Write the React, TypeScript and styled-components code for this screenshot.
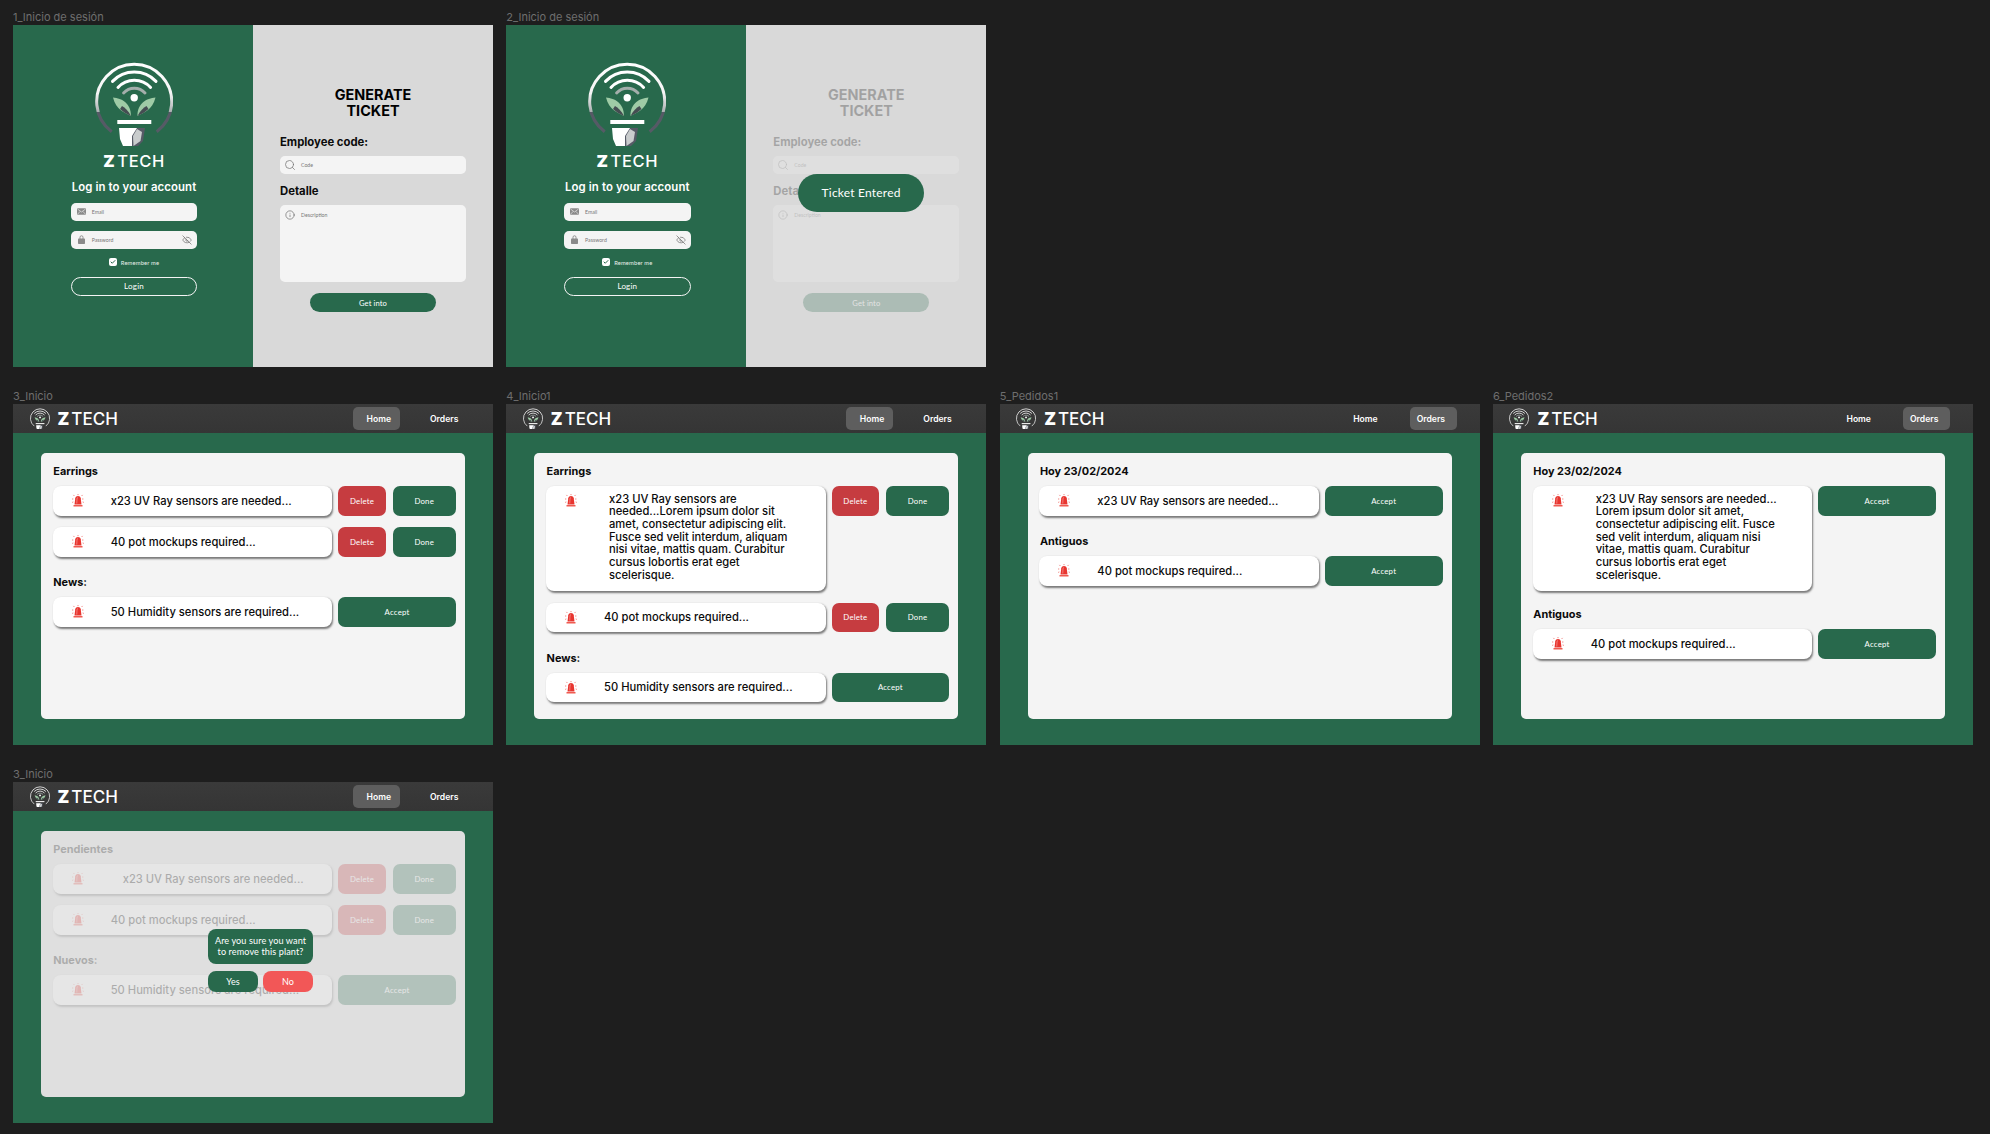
import React from "react";
import styled, { createGlobalStyle } from "styled-components";
import { EyeOff, Info, Search, Check } from "lucide-react";

const GREEN = "#28694c";
const HEAD = '"Inter", "Liberation Sans", sans-serif';
const SOFT = '"Lato", "Liberation Sans", sans-serif';

const Global = createGlobalStyle`
	html, body {
		margin: 0;
		padding: 0;
		background: #1e1e1e;
	}
	* {
		box-sizing: border-box;
	}
`;

const Canvas = styled.div`
	display: grid;
	grid-template-columns: repeat(4, 480px);
	column-gap: 13.33px;
	row-gap: 21px;
	align-items: start;
	align-content: start;
	width: 1990px;
	height: 1134px;
	padding: 9px 0 0 13px;
	overflow: hidden;
`;

const Figure = styled.section<{ $row?: number; $column?: number }>`
	grid-row: ${(p) => p.$row ?? "auto"};
	grid-column: ${(p) => p.$column ?? "auto"};
`;

const FrameLabel = styled.div`
	height: 16px;
	font: 400 11px/16px ${HEAD};
	color: #6e6e6e;
	white-space: nowrap;
`;

/* login frames */
const Split = styled.div`
	display: grid;
	grid-template-columns: 240px 240px;
	height: 342px;
`;

const BrandPanel = styled.div`
	display: flex;
	flex-direction: column;
	align-items: center;
	padding: 36px 0 0 2px;
	background: ${GREEN};
`;

const Wordmark = styled.div<{ $small?: boolean }>`
	display: flex;
	align-items: center;
	margin-top: ${(p) => (p.$small ? 0 : 7)}px;
	font: 500 ${(p) => (p.$small ? 17 : 16.5)}px/16px ${HEAD};
	letter-spacing: ${(p) => (p.$small ? 0 : 0.6)}px;
	color: #fff;
	b {
		font-weight: 900;
		margin-right: 2px;
	}
`;

const LoginTitle = styled.h2`
	margin: 11px 0 0;
	font: 600 11.4px/14px ${HEAD};
	letter-spacing: 0.1px;
	color: #fff;
	white-space: nowrap;
`;

const InputBox = styled.div<{ $gap: number }>`
	display: flex;
	align-items: center;
	gap: 6px;
	width: 126.6px;
	height: 18.6px;
	margin-top: ${(p) => p.$gap}px;
	padding: 0 5px 0 6px;
	border-radius: 5px;
	background: #f4f4f4;
	font: 400 5.2px ${SOFT};
	color: #777;
	svg {
		flex: none;
	}
	svg:last-child:not(:first-child) {
		margin-left: auto;
	}
`;

const RememberRow = styled.div`
	display: flex;
	align-items: center;
	gap: 4px;
	height: 10px;
	margin-top: 8px;
	font: 400 5.8px ${SOFT};
	letter-spacing: 0.15px;
	color: #e8efeb;
`;

const CheckBox = styled.span`
	display: flex;
	align-items: center;
	justify-content: center;
	width: 8px;
	height: 8px;
	border-radius: 2px;
	background: #fff;
	color: ${GREEN};
`;

const LoginButton = styled.button`
	width: 126.6px;
	height: 19px;
	margin-top: 9.5px;
	padding: 0;
	border: 1px solid #f4f4f4;
	border-radius: 10px;
	background: transparent;
	font: 400 8px ${SOFT};
	letter-spacing: 0.2px;
	color: #fff;
`;

const TicketPanel = styled.div`
	position: relative;
	background: #d9d9d9;
`;

const TicketForm = styled.div<{ $dim?: boolean }>`
	display: flex;
	flex-direction: column;
	height: 100%;
	padding: 62px 27px 0;
	opacity: ${(p) => (p.$dim ? 0.25 : 1)};
`;

const TicketTitle = styled.h2`
	margin: 0;
	font: 700 14.4px/16px ${HEAD};
	text-align: center;
	color: #000;
`;

const FieldLabel = styled.div<{ $gap: number }>`
	margin-top: ${(p) => p.$gap}px;
	font: 700 11.3px/14px ${HEAD};
	color: #0b0b0b;
`;

const TextField = styled.div<{ $tall?: boolean }>`
	display: flex;
	align-items: ${(p) => (p.$tall ? "flex-start" : "center")};
	gap: ${(p) => (p.$tall ? 6 : 5)}px;
	height: ${(p) => (p.$tall ? 77.5 : 18.6)}px;
	margin-top: 6.5px;
	padding: ${(p) => (p.$tall ? "5.5px 0 0 5px" : "0 0 0 4px")};
	border-radius: 5px;
	background: #f4f4f4;
	font: 400 5.2px/10px ${SOFT};
	color: #777;
	svg {
		flex: none;
	}
`;

const SubmitButton = styled.button`
	align-self: center;
	width: 126px;
	height: 19px;
	margin-top: 11px;
	padding: 0;
	border: 0;
	border-radius: 10px;
	background: ${GREEN};
	font: 400 7.6px ${SOFT};
	letter-spacing: 0.1px;
	color: #fff;
`;

const Toast = styled.div`
	position: absolute;
	left: 51.5px;
	top: 149px;
	display: flex;
	align-items: center;
	justify-content: center;
	width: 126.5px;
	height: 38px;
	padding-bottom: 1px;
	border-radius: 19px;
	background: ${GREEN};
	font: 400 12px ${SOFT};
	letter-spacing: 0.2px;
	color: #fff;
`;

/* app frames */
const AppFrame = styled.div`
	display: flex;
	flex-direction: column;
	height: 341px;
	background: ${GREEN};
`;

const Header = styled.header`
	display: flex;
	flex: none;
	align-items: center;
	justify-content: space-between;
	height: 29px;
	padding: 0 23px 0 16.5px;
	background: linear-gradient(#3a3a3a, #353535);
`;

const HeaderBrand = styled.div`
	display: flex;
	align-items: center;
	gap: 8px;
`;

const Nav = styled.nav`
	display: flex;
	gap: 23.5px;
`;

const NavItem = styled.a<{ $active?: boolean; $inset: number }>`
	display: flex;
	align-items: center;
	width: 47px;
	height: 23px;
	padding-left: ${(p) => p.$inset}px;
	border-radius: 5px;
	background: ${(p) => (p.$active ? "#5e5e5e" : "transparent")};
	font: 600 8.6px ${HEAD};
	color: #fff;
`;

const Body = styled.main`
	flex: 1;
	padding: 20px 28px 27px;
`;

const Card = styled.div<{ $dim?: boolean }>`
	height: 265.5px;
	border-radius: 5px;
	background: ${(p) => (p.$dim ? "#dfdfdf" : "#f4f4f4")};
	position: relative;
`;

const CardInner = styled.div<{ $dim?: boolean }>`
	padding: 11px 9px 0 11.7px;
	opacity: ${(p) => (p.$dim ? 0.24 : 1)};
`;

const SectionTitle = styled.h3<{ $gap: number }>`
	margin: ${(p) => p.$gap}px 0 8px;
	padding-left: 0.6px;
	font: 700 10.9px/14px ${HEAD};
	color: #0b0b0b;
`;

const ItemRow = styled.div`
	display: flex;
	gap: 6px;
	align-items: flex-start;
	& + & {
		margin-top: 11.5px;
	}
`;

const ItemPill = styled.div<{ $expanded: boolean }>`
	display: flex;
	flex: none;
	align-items: ${(p) => (p.$expanded ? "flex-start" : "center")};
	width: 279.5px;
	height: ${(p) => (p.$expanded ? 105 : 29.5)}px;
	padding: ${(p) => (p.$expanded ? "6.8px" : "0")} 0 0 19px;
	border-radius: 8px;
	background: #fff;
	box-shadow: 1px 1.5px 2px rgba(0, 0, 0, 0.5);
`;

const ItemText = styled.div<{ $indent: number; $expanded: boolean }>`
	margin-left: ${(p) => p.$indent - 31}px;
	padding-top: ${(p) => (p.$expanded ? 0 : 1)}px;
	font: 500 11.2px/12.67px ${HEAD};
	color: #0b0b0b;
	white-space: nowrap;
`;

const SirenSlot = styled.span<{ $expanded: boolean }>`
	display: flex;
	flex: none;
	margin-top: ${(p) => (p.$expanded ? 1 : 0)}px;
`;

const Actions = styled.div`
	display: flex;
	gap: 6.7px;
`;

const ActionButton = styled.button<{ $kind: "delete" | "done" | "accept" }>`
	width: ${(p) => ({ delete: 47.7, done: 63.3, accept: 117.7 }[p.$kind])}px;
	height: 29.5px;
	padding: 0;
	border: 0;
	border-radius: 7px;
	background: ${(p) => (p.$kind === "delete" ? "#c63c40" : GREEN)};
	font: 400 7.8px ${SOFT};
	letter-spacing: 0.2px;
	color: #fff;
`;

const Confirm = styled.div`
	position: absolute;
	left: 167px;
	top: 97.7px;
	width: 105px;
`;

const ConfirmBubble = styled.div`
	display: flex;
	align-items: center;
	justify-content: center;
	height: 35px;
	border-radius: 8px;
	background: ${GREEN};
	font: 400 9.1px/11px ${SOFT};
	letter-spacing: 0.1px;
	text-align: center;
	color: #fff;
`;

const ConfirmActions = styled.div`
	display: flex;
	justify-content: space-between;
	margin-top: 7px;
`;

const ConfirmButton = styled.button<{ $no?: boolean }>`
	width: 50px;
	height: 21.5px;
	padding: 0;
	border: 0;
	border-radius: 8px;
	background: ${(p) => (p.$no ? "#f25757" : GREEN)};
	font: 400 9px ${SOFT};
	color: #fff;
`;

function Logo({ width, id, light }: { width: number; id: string; light?: boolean }) {
	const low = light ? "#e8e8e8" : "#565a66";
	return (
		<svg width={width} height={(width * 85) / 78} viewBox="0 0 78 85" style={{ flex: "none" }}>
			<defs>
				<linearGradient id={id} gradientUnits="userSpaceOnUse" x1="0" y1="0" x2="0" y2="72">
					<stop offset="0" stopColor="#fff" />
					<stop offset="0.45" stopColor="#f4f4f4" />
					<stop offset="0.71" stopColor={light ? "#eee" : "#a9aeb0"} />
					<stop offset="0.71" stopColor={low} />
					<stop offset="1" stopColor={low} />
				</linearGradient>
			</defs>
			<path d="M16.7 70.7A37.5 37.5 0 1 1 61.7 70.7" fill="none" stroke={`url(#${id})`} strokeWidth="3" />
			<g fill="none" strokeWidth="3" strokeLinecap="round">
				<path d="M17.5 20.4A30 30 0 0 1 61 20.4" stroke="#fff" />
				<path d="M23 26.4A22 22 0 0 1 55.6 26.4" stroke="#fff" />
				<path d="M28.6 32A14.5 14.5 0 0 1 50 32" stroke="#a4aeab" />
			</g>
			<circle cx="39.2" cy="36.7" r="3.7" fill="#fff" />
			<path d="M18 36.5C27 37.5 36 42 36 55C30 52 21 49 18 36.5Z" fill="#9fcba6" />
			<path d="M60.5 36.5C51.5 37.5 42.5 42 42.5 55C48.5 52 57.5 49 60.5 36.5Z" fill="#9fcba6" />
			<path d="M25 48C28 51 32 53 36 55C33.5 50 30 46.5 27 45Z" fill="#454d52" />
			<path d="M53.5 48C50.5 51 46.5 53 42.5 55C45 50 48.5 46.5 51.5 45Z" fill="#454d52" />
			<rect x="22.3" y="59" width="34" height="4" fill="#fff" />
			<path d="M28 67H50L48 80L43 85H30Z" fill="#565a66" />
			<path d="M24 67H42L37 75V85H28L25 78Z" fill="#fff" />
			<path d="M38 75L42 68L47 71L45.5 80L38.5 85Z" fill="#c9cccd" />
		</svg>
	);
}

function Brand({ small }: { small?: boolean }) {
	return (
		<Wordmark $small={small}>
			<b>Z</b>TECH
		</Wordmark>
	);
}

function MailIcon() {
	return (
		<svg width="9" height="7" viewBox="0 0 18 13">
			<rect width="18" height="13" rx="1.5" fill="#8a8a8a" />
			<path d="M1 1.5L9 7.5L17 1.5M1 12L6.5 6M17 12L11.5 6" fill="none" stroke="#f4f4f4" strokeWidth="1.2" />
		</svg>
	);
}

function LockIcon() {
	return (
		<svg width="9" height="9" viewBox="-2 0 18 18">
			<path d="M4 8V4.5a3 3 0 0 1 6 0V8" fill="none" stroke="#8a8a8a" strokeWidth="1.8" />
			<rect y="7" width="14" height="11" rx="1.5" fill="#8a8a8a" />
		</svg>
	);
}

function Siren() {
	return (
		<svg width="12" height="13" viewBox="0 0 24 26">
			<path d="M5 21L6.5 8.5C7 5.5 9.5 4 12 4S17 5.5 17.5 8.5L19 21Z" fill="#e8352f" />
			<path d="M9.5 19L10 9.5C10.2 8 11 7 12 7" fill="none" stroke="#fff" strokeOpacity="0.6" strokeWidth="1.2" />
			<rect x="3" y="22" width="18" height="3" fill="#ef5a50" />
			<g stroke="#e8352f" strokeWidth="1.2" strokeLinecap="round" strokeDasharray="1 1.5">
				<path d="M12 0.5V2.5M3.5 2.5L5 4.5M20.5 2.5L19 4.5M0.8 10H3M21 10H23.2M1 16.5L3 15.8M23 16.5L21 15.8" />
			</g>
		</svg>
	);
}

function LoginPanel({ id }: { id: string }) {
	return (
		<BrandPanel>
			<Logo width={78} id={id} />
			<Brand />
			<LoginTitle>Log in to your account</LoginTitle>
			<InputBox $gap={8.5}>
				<MailIcon />
				Email
			</InputBox>
			<InputBox $gap={9.5}>
				<LockIcon />
				Password
				<EyeOff size={10} color="#666" strokeWidth={1.6} />
			</InputBox>
			<RememberRow>
				<CheckBox>
					<Check size={6} strokeWidth={4} />
				</CheckBox>
				Remember me
			</RememberRow>
			<LoginButton>Login</LoginButton>
		</BrandPanel>
	);
}

function TicketContent({ dim }: { dim?: boolean }) {
	return (
		<TicketForm $dim={dim}>
			<TicketTitle>
				GENERATE
				<br />
				TICKET
			</TicketTitle>
			<FieldLabel $gap={16}>Employee code:</FieldLabel>
			<TextField>
				<Search size={12} color="#777" strokeWidth={1.5} />
				Code
			</TextField>
			<FieldLabel $gap={10.4}>Detalle</FieldLabel>
			<TextField $tall>
				<Info size={10} color="#555" strokeWidth={1.4} />
				Description
			</TextField>
			<SubmitButton>Get into</SubmitButton>
		</TicketForm>
	);
}

function AppHeader({ active, id }: { active: "home" | "orders"; id: string }) {
	return (
		<Header>
			<HeaderBrand>
				<Logo width={20} id={id} light />
				<Brand small />
			</HeaderBrand>
			<Nav>
				<NavItem $active={active === "home"} $inset={14}>
					Home
				</NavItem>
				<NavItem $active={active === "orders"} $inset={7}>
					Orders
				</NavItem>
			</Nav>
		</Header>
	);
}

type Kind = "pending" | "accept";

interface IItem {
	lines: string[];
	indent?: number;
	kind: Kind;
}

interface ISection {
	title: string;
	gap: number;
	items: IItem[];
}

function Item({ lines, indent = 58, kind }: IItem) {
	const expanded = lines.length > 1;
	return (
		<ItemRow>
			<ItemPill $expanded={expanded}>
				<SirenSlot $expanded={expanded}>
					<Siren />
				</SirenSlot>
				<ItemText $indent={indent} $expanded={expanded}>
					{lines.map((line) => (
						<div key={line}>{line}</div>
					))}
				</ItemText>
			</ItemPill>
			<Actions>
				{kind === "pending" ? (
					<>
						<ActionButton $kind="delete">Delete</ActionButton>
						<ActionButton $kind="done">Done</ActionButton>
					</>
				) : (
					<ActionButton $kind="accept">Accept</ActionButton>
				)}
			</Actions>
		</ItemRow>
	);
}

function AppScreen({
	active,
	id,
	sections,
	dim,
	children
}: {
	active: "home" | "orders";
	id: string;
	sections: ISection[];
	dim?: boolean;
	children?: React.ReactNode;
}) {
	return (
		<AppFrame>
			<AppHeader active={active} id={id} />
			<Body>
				<Card $dim={dim}>
					<CardInner $dim={dim}>
						{sections.map((s) => (
							<div key={s.title}>
								<SectionTitle $gap={s.gap}>{s.title}</SectionTitle>
								{s.items.map((item) => (
									<Item key={item.lines[0]} {...item} />
								))}
							</div>
						))}
					</CardInner>
					{children}
				</Card>
			</Body>
		</AppFrame>
	);
}

const UV = "x23 UV Ray sensors are needed...";
const POTS = "40 pot mockups required...";
const HUMIDITY = "50 Humidity sensors are required...";

export default function App() {
	return (
		<>
			<Global />
			<Canvas>
				<Figure>
					<FrameLabel>1_Inicio de sesión</FrameLabel>
					<Split>
						<LoginPanel id="arc-1" />
						<TicketPanel>
							<TicketContent />
						</TicketPanel>
					</Split>
				</Figure>
				<Figure>
					<FrameLabel>2_Inicio de sesión</FrameLabel>
					<Split>
						<LoginPanel id="arc-2" />
						<TicketPanel>
							<TicketContent dim />
							<Toast>Ticket Entered</Toast>
						</TicketPanel>
					</Split>
				</Figure>
				<Figure $row={2} $column={1}>
					<FrameLabel>3_Inicio</FrameLabel>
					<AppScreen
						active="home"
						id="arc-3"
						sections={[
							{
								title: "Earrings",
								gap: 0,
								items: [
									{ lines: [UV], kind: "pending" },
									{ lines: [POTS], kind: "pending" }
								]
							},
							{ title: "News:", gap: 18.5, items: [{ lines: [HUMIDITY], kind: "accept" }] }
						]}
					/>
				</Figure>
				<Figure $row={2} $column={2}>
					<FrameLabel>4_Inicio1</FrameLabel>
					<AppScreen
						active="home"
						id="arc-4"
						sections={[
							{
								title: "Earrings",
								gap: 0,
								items: [
									{
										lines: [
											"x23 UV Ray sensors are",
											"needed...Lorem ipsum dolor sit",
											"amet, consectetur adipiscing elit.",
											"Fusce sed velit interdum, aliquam",
											"nisi vitae, mattis quam. Curabitur",
											"cursus lobortis erat eget",
											"scelerisque."
										],
										indent: 63,
										kind: "pending"
									},
									{ lines: [POTS], kind: "pending" }
								]
							},
							{ title: "News:", gap: 18.5, items: [{ lines: [HUMIDITY], kind: "accept" }] }
						]}
					/>
				</Figure>
				<Figure $row={2} $column={3}>
					<FrameLabel>5_Pedidos1</FrameLabel>
					<AppScreen
						active="orders"
						id="arc-5"
						sections={[
							{ title: "Hoy 23/02/2024", gap: 0, items: [{ lines: [UV], kind: "accept" }] },
							{ title: "Antiguos", gap: 18.5, items: [{ lines: [POTS], kind: "accept" }] }
						]}
					/>
				</Figure>
				<Figure $row={2} $column={4}>
					<FrameLabel>6_Pedidos2</FrameLabel>
					<AppScreen
						active="orders"
						id="arc-6"
						sections={[
							{
								title: "Hoy 23/02/2024",
								gap: 0,
								items: [
									{
										lines: [
											UV,
											"Lorem ipsum dolor sit amet,",
											"consectetur adipiscing elit. Fusce",
											"sed velit interdum, aliquam nisi",
											"vitae, mattis quam. Curabitur",
											"cursus lobortis erat eget",
											"scelerisque."
										],
										indent: 63,
										kind: "accept"
									}
								]
							},
							{ title: "Antiguos", gap: 16, items: [{ lines: [POTS], kind: "accept" }] }
						]}
					/>
				</Figure>
				<Figure $row={3} $column={1}>
					<FrameLabel>3_Inicio</FrameLabel>
					<AppScreen
						active="home"
						id="arc-7"
						dim
						sections={[
							{
								title: "Pendientes",
								gap: 0,
								items: [
									{ lines: [UV], indent: 70, kind: "pending" },
									{ lines: [POTS], kind: "pending" }
								]
							},
							{ title: "Nuevos:", gap: 18.5, items: [{ lines: [HUMIDITY], kind: "accept" }] }
						]}
					>
						<Confirm>
							<ConfirmBubble>
								Are you sure you want
								<br />
								to remove this plant?
							</ConfirmBubble>
							<ConfirmActions>
								<ConfirmButton>Yes</ConfirmButton>
								<ConfirmButton $no>No</ConfirmButton>
							</ConfirmActions>
						</Confirm>
					</AppScreen>
				</Figure>
			</Canvas>
		</>
	);
}
